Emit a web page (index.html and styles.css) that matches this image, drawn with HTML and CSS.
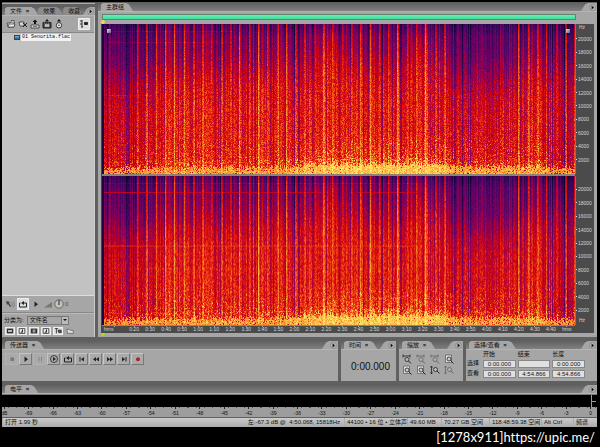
FILE: index.html
```html
<!DOCTYPE html>
<html lang="zh-CN">
<head>
<meta charset="utf-8">
<title>Audition</title>
<link rel="stylesheet" href="styles.css">
</head>
<body>
<svg class="defs" aria-hidden="true">
  <symbol id="menu" viewBox="0 0 8 8"><circle cx="4" cy="4" r="3.4" fill="#b4b4b4" stroke="#777" stroke-width=".6"/><path d="M3 1.8 5.8 4 3 6.2z" fill="#111"/></symbol>
  <symbol id="open" viewBox="0 0 10 10"><path d="M1 4h3l1-1h3v5H2z" fill="#ddd" stroke="#333" stroke-width=".7"/><path d="M5 1.5h3V4M2 8l1-3h6L8 8z" fill="#eee" stroke="#333" stroke-width=".7"/></symbol>
  <symbol id="close" viewBox="0 0 10 10"><path d="M1 3h5v4H2z" fill="#ddd" stroke="#333" stroke-width=".8"/><path d="m5 4 4 4m0-4L5 8" stroke="#222"/></symbol>
  <symbol id="insert" viewBox="0 0 10 10"><path d="M5 .5 7.4 3H6v2H4V3H2.600z" fill="#111"/><path d="M1 6h8v3H1z" fill="#ddd" stroke="#333" stroke-width=".8"/><path d="M3 7.500h4" stroke="#333" stroke-width=".6"/></symbol>
  <symbol id="film" viewBox="0 0 10 10"><path d="M5 0 7 2.500H3z" fill="#111"/><path d="M1 3.500h8v5.500H1z" fill="#444" stroke="#222"/><path d="M3 5.500h4v2H3zM2 4h1m1 0h1m1 0h1" fill="#bbb" stroke="#ddd" stroke-width=".5"/></symbol>
  <symbol id="cd" viewBox="0 0 10 10"><path d="M5 0 7 2.500H3z" fill="#111"/><circle cx="5" cy="6.300" r="2.700" fill="#eee" stroke="#333"/><circle cx="5" cy="6.300" r=".7"/></symbol>
  <symbol id="opts" viewBox="0 0 10 10"><path d="M1 2h2M1 5h2M2 8h2M3 1v7" stroke="#333"/><rect x="5" y="3" width="4" height="3" rx="1" fill="#222"/></symbol>
  <symbol id="auto" viewBox="0 0 10 10"><path d="m1 2 4 1-1 1 2 3-1 1-2-3-1 1z" fill="#444"/><path d="M6.500 3q1.500 2 0 5M8.500 2.500q1.500 3 0 6" fill="none" stroke="#777" stroke-width=".7"/></symbol>
  <symbol id="loop" viewBox="0 0 10 10"><path d="M2.500 4H1.500v4h7V4H5" fill="none" stroke="#222"/><path d="M6 2v4L3 4z" fill="#222"/></symbol>
  <symbol id="play" viewBox="0 0 10 10"><path d="m3.500 2.500 3.500 2.700L3.500 8z" fill="#222"/></symbol>
  <symbol id="stop" viewBox="0 0 10 10"><path d="M3.500 3.500h3.500V7H3.500z" fill="#777"/></symbol>
  <symbol id="pause" viewBox="0 0 10 10"><path d="M4 3v4.500M6.500 3v4.500" stroke="#888"/></symbol>
  <symbol id="playcircle" viewBox="0 0 10 10"><circle cx="5" cy="5" r="3.500" fill="none" stroke="#222" stroke-width=".8"/><path d="m4 3 3 2-3 2z" fill="#222"/></symbol>
  <symbol id="start" viewBox="0 0 10 10"><path d="M3 3v4.500" stroke="#222"/><path d="M7 3v4.500L4 5.200z" fill="#222"/></symbol>
  <symbol id="rew" viewBox="0 0 10 10"><path d="M5 3v4.500L2 5.200zM8 3v4.500L5 5.200z" fill="#222"/></symbol>
  <symbol id="fwd" viewBox="0 0 10 10"><path d="M2 3v4.500l3-2.300zM5 3v4.500l3-2.300z" fill="#222"/></symbol>
  <symbol id="end" viewBox="0 0 10 10"><path d="M7 3v4.500" stroke="#222"/><path d="M3 3v4.500l3-2.300z" fill="#222"/></symbol>
  <symbol id="rec" viewBox="0 0 10 10"><circle cx="5" cy="5.200" r="2" fill="#b3202a"/></symbol>
  <symbol id="volume" viewBox="0 0 10 10"><path d="M1 8.500 9 3v5.500z" fill="#777"/></symbol>
  <symbol id="knob" viewBox="0 0 10 10"><circle cx="5" cy="5" r="4.200" fill="#c5c4b8" stroke="#555" stroke-width=".8"/><path d="M5 1v5" stroke="#222"/></symbol>
  <symbol id="wave" viewBox="0 0 10 10"><path d="M1 2h8v6H1z" fill="#333"/><path d="M2.500 4h5v2h-5z" fill="#ddd"/></symbol>
  <symbol id="note" viewBox="0 0 10 10"><path d="M1.500 2h7v6h-7z" fill="#eee" stroke="#333"/><path d="M5.500 3v3.500M3.500 6.500h2" stroke="#111" stroke-width="1.200"/></symbol>
  <symbol id="tracks" viewBox="0 0 10 10"><path d="M1 2h8v6H1z" fill="#333"/><path d="M3.500 3h1v4h-1zM5.500 3h1v4h-1z" fill="#eee"/></symbol>
  <symbol id="tree" viewBox="0 0 10 10"><path d="M1 2h4M3 2v6M5 4h4v3H6z" fill="#555" stroke="#222"/></symbol>
  <symbol id="folder" viewBox="0 0 10 10"><path d="M1 3h3l1 1h4v4H2z" fill="#ddd" stroke="#666"/></symbol>
  <symbol id="zoomh" viewBox="0 0 10 10"><path d="M1 2h7M1 .5v3M8 .5v3" stroke="#222" stroke-width=".8"/><circle cx="5" cy="5.500" r="2" fill="#bbb" stroke="#222" stroke-width=".8"/><path d="m6.500 7 2.500 2.500" stroke="#222"/></symbol>
  <symbol id="zoompage" viewBox="0 0 10 10"><path d="M1.500 1h6v7.500h-6z" fill="#ddd" stroke="#555" stroke-width=".7"/><circle cx="5" cy="5" r="2" fill="#ccc" stroke="#222" stroke-width=".8"/><path d="m6.500 6.500 3 3" stroke="#222"/></symbol>
  <symbol id="zoomv" viewBox="0 0 10 10"><path d="M1.500 1v8M.5 2.500l1-1.500 1 1.500m-2 5 1 1.500 1-1.500" fill="none" stroke="#222" stroke-width=".8"/><circle cx="5.500" cy="4.500" r="2" fill="#bbb" stroke="#222" stroke-width=".8"/><path d="m7 6 2.500 2.500" stroke="#222"/></symbol>
</svg>

<main class="app">
  <div class="workspace">
    <section class="panel files">
      <header class="head">
        <span class="tab">文件 <b>×</b></span><span class="tab idle">效果</span><span class="tab idle last">收藏夹</span>
        <button class="menu" aria-label="菜单"><svg><use href="#menu"/></svg></button>
      </header>
      <div class="body file-body">
        <div class="tools">
          <button aria-label="打开"><svg><use href="#open"/></svg></button>
          <button aria-label="关闭"><svg><use href="#close"/></svg></button>
          <button aria-label="插入"><svg><use href="#insert"/></svg></button>
          <button aria-label="编辑"><svg><use href="#film"/></svg></button>
          <button aria-label="光盘"><svg><use href="#cd"/></svg></button>
          <button class="lit push" aria-label="选项"><svg><use href="#opts"/></svg></button>
        </div>
        <ul class="list"><li><i class="thumb"></i><span>01 Senorita.flac</span></li></ul>
        <div class="preview">
          <button aria-label="自动播放"><svg><use href="#auto"/></svg></button>
          <button class="lit" aria-label="循环"><svg><use href="#loop"/></svg></button>
          <button aria-label="播放"><svg><use href="#play"/></svg></button>
          <span class="vol"><svg><use href="#volume"/></svg><svg><use href="#knob"/></svg>0</span>
        </div>
        <div class="sort"><label for="sort">分类为:</label><span class="pick"><select id="sort"><option>文件名</option></select></span></div>
        <div class="filters">
          <button class="lit" aria-label="波形"><svg><use href="#wave"/></svg></button>
          <button class="lit" aria-label="音符"><svg><use href="#note"/></svg></button>
          <button class="lit" aria-label="视频"><svg><use href="#tracks"/></svg></button>
          <button class="lit" aria-label="循环文件"><svg><use href="#note"/></svg></button>
          <button class="lit" aria-label="树"><svg><use href="#tree"/></svg></button>
          <button aria-label="文件夹"><svg><use href="#folder"/></svg></button>
        </div>
      </div>
    </section>

    <section class="panel editor">
      <header class="head"><span class="tab">主群组</span><button class="menu" aria-label="菜单"><svg><use href="#menu"/></svg></button></header>
      <div class="body edit-body">
        <div class="range"></div>
        <div class="cue"></div>
        <div class="view">
          <div class="spectra">
            <canvas data-channel="0"></canvas>
            <canvas data-channel="1"></canvas>
            <i class="grip left"></i><i class="grip right"></i>
          </div>
          <div class="freqs">
            <div class="scale top"><span class="hz">Hz</span><div class="marks"></div></div>
            <div class="scale bottom"><div class="marks"></div><span class="hz">Hz</span></div>
          </div>
          <div class="times"></div>
        </div>
        <div class="cue green"></div>
      </div>
    </section>
  </div>

  <div class="dock">
    <section class="panel">
      <header class="head"><span class="tab">传送器 <b>×</b></span><button class="menu" aria-label="菜单"><svg><use href="#menu"/></svg></button></header>
      <div class="body transport">
        <button class="flat" aria-label="停止"><svg><use href="#stop"/></svg></button>
        <button aria-label="播放"><svg><use href="#play"/></svg></button>
        <button class="flat" aria-label="暂停"><svg><use href="#pause"/></svg></button>
        <button aria-label="播放到结尾"><svg><use href="#playcircle"/></svg></button>
        <button aria-label="循环播放"><svg><use href="#loop"/></svg></button>
        <button aria-label="开头"><svg><use href="#start"/></svg></button>
        <button aria-label="倒退"><svg><use href="#rew"/></svg></button>
        <button aria-label="快进"><svg><use href="#fwd"/></svg></button>
        <button aria-label="结尾"><svg><use href="#end"/></svg></button>
        <button aria-label="录音"><svg><use href="#rec"/></svg></button>
      </div>
    </section>
    <section class="panel">
      <header class="head"><span class="tab">时间 <b>×</b></span><button class="menu" aria-label="菜单"><svg><use href="#menu"/></svg></button></header>
      <div class="body clock">0:00.000</div>
    </section>
    <section class="panel">
      <header class="head"><span class="tab">缩放 <b>×</b></span><button class="menu" aria-label="菜单"><svg><use href="#menu"/></svg></button></header>
      <div class="body zooms">
        <button aria-label="水平放大"><svg><use href="#zoomh"/></svg></button>
        <button class="dim" aria-label="水平缩小"><svg><use href="#zoomh"/></svg></button>
        <button class="dim" aria-label="全部缩小"><svg><use href="#zoomh"/></svg></button>
        <button aria-label="缩放到选区"><svg><use href="#zoompage"/></svg></button>
        <button aria-label="左边缘"><svg><use href="#zoompage"/></svg></button>
        <button aria-label="右边缘"><svg><use href="#zoompage"/></svg></button>
        <button aria-label="垂直放大"><svg><use href="#zoomv"/></svg></button>
        <button class="dim" aria-label="垂直缩小"><svg><use href="#zoomv"/></svg></button>
      </div>
    </section>
    <section class="panel">
      <header class="head"><span class="tab">选择/查看 <b>×</b></span><button class="menu" aria-label="菜单"><svg><use href="#menu"/></svg></button></header>
      <div class="body select">
        <span></span><span>开始</span><span>结束</span><span>长度</span>
        <span>选择</span><input aria-label="选择开始" value="0:00.000"><input aria-label="选择结束" value=""><input aria-label="选择长度" value="0:00.000">
        <span>查看</span><input aria-label="查看开始" value="0:00.000"><input aria-label="查看结束" value="4:54.866"><input aria-label="查看长度" value="4:54.866">
      </div>
    </section>
  </div>

  <section class="panel levels">
    <header class="head"><span class="tab">电平 <b>×</b></span><button class="menu" aria-label="菜单"><svg><use href="#menu"/></svg></button></header>
    <div class="body">
      <div class="meter"><i></i></div>
      <div class="ruler"></div>
    </div>
  </section>

  <footer class="status">
    <span>打开 1.99 秒</span><span class="pos">左:-67.3 dB @ &nbsp;4:50.068, 15818Hz</span><span>44100 • 16 位 • 立体声</span><span>49.60 MB</span><span>70.27 GB 空间</span><span>118:48:59.38 空间</span><span>Alt Ctrl</span><span>频谱</span>
  </footer>
</main>
<p class="credit">[1278x911]https://upic.me/</p>
<script src="app.js"></script>
</body>
</html>
```
FILE: styles.css
```css
* { box-sizing: border-box; }
body {
  margin: 0;
  height: 100vh;
  display: flex;
  flex-direction: column;
  background: #000;
  color: #111;
  font: 6px/7px "Liberation Sans", "Noto Sans CJK SC", sans-serif;
}
.defs { position: absolute; width: 0; height: 0; }
button { display: flex; align-items: center; justify-content: center; padding: 0; border: 0; background: none; }
svg { display: block; width: 10px; height: 10px; flex: none; }
.app {
  flex: 1;
  min-height: 0;
  margin: 2px 3px 0 2px;
  display: flex;
  flex-direction: column;
  gap: 4px;
  background: #606060;
}
.workspace { flex: 1; min-height: 0; display: grid; grid-template-columns: 93fr 499fr; gap: 3px; padding-top: 1px; }
.panel { min-width: 0; min-height: 0; display: flex; flex-direction: column; }
.head { height: 8px; display: flex; flex: none; padding-left: 3px; background: linear-gradient(#606060, #808080); }
.tab {
  padding: 0 9px 0 5px;
  line-height: 8px;
  white-space: nowrap;
  background: #a6a6a6;
  clip-path: polygon(0 20%, 2px 0, calc(100% - 7px) 0, calc(100% - 4px) 20%, 100% 100%, 0 100%);
}
.tab b { padding-left: 2px; font-size: 6px; }
.tab.idle { background: #8c8c8c; padding: 0 8px 0 5px; }
.tab.last { padding-right: 0; flex: 0 1 22px; overflow: hidden; }
.menu {
  width: 16px;
  height: 8px;
  margin-left: auto;
  flex: none;
  padding: 1px 1px 0 7px;
  background: #a6a6a6;
  clip-path: polygon(0 100%, 4px 20%, 7px 0, 100% 0, 100% 100%);
}
.files .menu { width: 12px; padding-left: 4px; }
.menu svg { width: 7px; height: 7px; }
.body { flex: 1; min-height: 0; background: #a6a6a6; border-top: 1px solid #b4b4b4; }

.files { padding-top: 3px; border-top: 1px solid #aaa; }
.file-body { display: flex; flex-direction: column; border-right: 1px solid #ccc; }
.tools { display: flex; align-items: center; gap: 2px; height: 16px; padding: 0 4px; }
.push { margin-left: auto; }
.lit { background: #ddd; border: 1px solid #eee; }
.list { flex: 1; margin: 0; padding: 1px 0 0 12px; list-style: none; background: #c2c2c2; border-top: 1px solid #888; border-bottom: 1px solid #ddd; }
.list li { display: flex; align-items: center; gap: 1px; }
.list span { background: #f2f2f2; padding: 0 1px; font: 5px/7px "Liberation Mono", monospace; }
.thumb { width: 6px; height: 5px; background: linear-gradient(#7fb3d8, #17618f); border: 1px solid #345; }
.preview { display: flex; align-items: center; gap: 2px; height: 17px; padding-left: 3px; border-bottom: 1px solid #888; }
.vol { display: flex; align-items: center; gap: 1px; color: #553; }
.sort { display: flex; align-items: center; gap: 3px; height: 14px; padding-left: 2px; border-top: 1px solid #bbb; }
.pick { position: relative; }
.pick::after { content: ""; position: absolute; right: 2px; top: 3px; border: 2px solid transparent; border-top-color: #111; pointer-events: none; }
select { display: block; width: 42px; height: 9px; padding: 0 2px; appearance: none; border: 1px solid #777; border-radius: 0; background: linear-gradient(90deg, #a6a6a6 33px, #777 33px, #777 34px, #bbb 34px); color: #111; font: inherit; line-height: 7px; }
.filters { display: flex; gap: 2px; padding: 0 3px 2px; }
.filters button { height: 8px; width: 10px; }
.filters svg { height: 8px; }

.edit-body { display: flex; flex-direction: column; padding: 2px 3px 0; }
.range { height: 6px; margin: 0 18px 0 1px; background: linear-gradient(#62f0b6, #45dc9c); border: 1px solid #61846f; }
.cue { height: 4px; background: radial-gradient(circle at 2px 2px, #f2d35b 2px, transparent 2px); }
.cue.green { height: 4px; background: radial-gradient(circle at 2px 1px, #b6d321 2px, transparent 2px); }
.view { flex: 1; min-height: 0; display: grid; grid-template: minmax(0, 1fr) 8px / minmax(0, 1fr) 19px; background: #4b4b4b; border-left: 1px solid #444; color: #d4d4d4; font-size: 5px; line-height: 6px; }
.spectra { position: relative; min-height: 0; display: grid; grid-template-rows: minmax(0, 1fr) minmax(0, 1fr); gap: 2px; background: #8d8175; }
canvas { display: block; width: 100%; height: 100%; min-height: 0; }
.grip { position: absolute; top: 5px; width: 4px; height: 4px; background: linear-gradient(135deg, #ddd, #646078); }
.grip.left { left: 5px; }
.grip.right { right: 5px; }
.freqs { display: grid; grid-template-rows: minmax(0, 1fr) minmax(0, 1fr); gap: 2px; }
.scale { display: flex; flex-direction: column; border-left: 1px solid #777; }
.hz { height: 8px; padding-left: 3px; }
.top { padding-bottom: 7px; }
.bottom { padding-top: 7px; }
.marks { flex: 1; display: flex; flex-direction: column; }
.marks span { flex: 1; display: flex; align-items: center; gap: 1px; }
.marks span::before { content: ""; width: 1px; height: 1px; background: #ddd; }
.times { display: flex; border-top: 1px solid #888; }
.times span { flex: 16 0 0; min-width: 0; text-align: center; background: linear-gradient(#aaa, #aaa) center top / 1px 1px no-repeat; }
.times span:first-child { flex-grow: 24; text-align: left; text-indent: 2px; }

.dock { display: grid; grid-template-columns: 336fr 55fr 64fr 131fr; gap: 3px; height: 40px; flex: none; }
.transport { display: flex; align-items: flex-start; gap: 1px; padding: 3px 3px; }
.transport button { width: 13px; height: 12px; background: #aaa; border: 1px solid; border-color: #c6c6c6 #777 #777 #c6c6c6; }
.transport .flat { border-color: #b2b2b2; }
.clock { display: flex; align-items: center; justify-content: flex-end; padding: 2px 6px 0 0; font-size: 10px; }
.zooms { display: grid; grid-template-columns: repeat(4, 10px); justify-content: space-between; align-content: space-evenly; padding: 2px 9px 4px 3px; }
.dim { opacity: .5; }
.select { display: grid; grid-template-columns: 14px 1fr 1fr 1fr; gap: 2px; padding: 1px 12px 3px 1px; align-content: space-between; }
.select input { width: 100%; min-width: 0; height: 8px; padding: 0; border: 1px solid #888; background: #e0e0e0; color: #111; text-align: center; font: inherit; line-height: 6px; }

.levels { flex: none; }
.levels .body { overflow: hidden; }
.meter { height: 13px; background: #000; border-top: 1px solid #777; display: flex; justify-content: flex-end; }
.meter i { width: 5px; margin-right: 1px; border-left: 1px solid #999; background: linear-gradient(#999, #999) center / 100% 1px no-repeat; }
.ruler { height: 10px; margin: 0 -6px 0 -10px; display: flex; font-size: 5px; line-height: 6px; background: #9d9d9d; }
.ruler span { flex: 1 0 0; min-width: 0; padding-top: 3px; text-align: center; background: linear-gradient(#222, #222) center top / 1px 2px no-repeat, repeating-linear-gradient(90deg, #555 0 1px, transparent 1px 8px) 0 0 / 100% 1px no-repeat; }
.status { flex: none; height: 9px; margin-top: -3px; display: grid; grid-template-columns: 165px 1fr 63px 34px 48px 52px 32px 24px; line-height: 8px; background: linear-gradient(#ccc, #aaa); white-space: nowrap; }
.status span { padding-left: 2px; border-left: 1px solid #aaa; }
.status .pos { text-align: right; padding-right: 4px; border: 0; }
.credit { flex: none; margin: 0; height: 20px; padding-right: 5px; color: #fff; text-align: right; font: 13px/20px Lato, sans-serif; font-variant-ligatures: none; }
```
FILE: app.js
```js
const fill = (node, labels) => {
  for (const text of labels) {
    const span = document.createElement('span');
    span.textContent = text;
    node.append(span);
  }
};

document.querySelectorAll('.marks').forEach(node =>
  fill(node, Array.from({ length: 10 }, (_, i) => 20000 - i * 2000)));

const seconds = Array.from({ length: 27 }, (_, i) => 20 + i * 10);
fill(document.querySelector('.times'), ['hms',
  ...seconds.map(s => Math.floor(s / 60) + ':' + String(s % 60).padStart(2, '0')), 'hms']);
fill(document.querySelector('.ruler'), ['dB', ...Array.from({ length: 24 }, (_, i) => String(i * 3 - 69))]);

// Palette from silence to full level.
const stops = [
  [0, 16, 2, 48], [0.2, 66, 6, 98], [0.34, 120, 0, 100], [0.46, 180, 0, 50],
  [0.58, 218, 12, 12], [0.7, 243, 68, 20], [0.84, 250, 145, 45], [1, 253, 228, 100]
];
function colour(v) {
  v = Math.max(0.001, Math.min(1, v));
  let i = 1;
  while (stops[i][0] < v) i++;
  const a = stops[i - 1], b = stops[i], t = (v - a[0]) / (b[0] - a[0]);
  return [1, 2, 3].map(k => a[k] + (b[k] - a[k]) * t);
}
function generator(seed) {
  return () => {
    seed = (seed * 1664525 + 1013904223) >>> 0;
    return seed / 4294967296;
  };
}
// Loudness, purple-band depth and bass strength over the length of the song.
const loudness = [[0, -0.08], [0.09, -0.06], [0.13, 0], [0.3, 0], [0.45, 0.01], [0.48, 0.06], [0.5, 0.02], [0.66, 0.01], [0.68, 0.05], [0.72, 0], [0.74, -0.03], [0.9, -0.01], [0.95, -0.02], [0.96, -0.1], [1, -0.08]];
const ceiling = [[0, 0.35], [0.09, 0.35], [0.12, 0.29], [0.45, 0.24], [0.48, 0.12], [0.51, 0.24], [0.65, 0.24], [0.68, 0.14], [0.72, 0.22], [0.74, 0.33], [0.87, 0.34], [0.89, 0.26], [1, 0.26]];
const bass = [[0, 0], [0.1, 0.15], [0.38, 0.25], [0.42, 0.6], [0.48, 1], [0.72, 1], [0.74, 0.45], [0.94, 0.4], [0.95, 0], [1, 0.1]];
function lerp(points, t) {
  for (let i = 1; i < points.length; i++) {
    if (t <= points[i][0]) {
      const [x0, y0] = points[i - 1], [x1, y1] = points[i];
      return y0 + (y1 - y0) * (t - x0) / (x1 - x0);
    }
  }
  return points[points.length - 1][1];
}
function drawSpectrum(canvas, channel) {
  const w = canvas.width = Math.max(1, canvas.clientWidth);
  const h = canvas.height = Math.max(1, canvas.clientHeight);
  const ctx = canvas.getContext('2d');
  const image = ctx.createImageData(w, h);
  const columns = generator(77), noise = generator(500 + channel);
  for (let x = 0; x < w; x++) {
    const t = x / w, px = t * 473;
    const quiet = t > 0.735 && t < 0.875;
    const phase = (px - 34.5 + 930) % 9.3;
    let beat = phase < 1 ? 0.36 : phase < 2 ? 0.28 : phase > 4.3 && phase < 5.3 ? 0.1 : phase > 7.6 ? -0.06 : 0;
    if (quiet) beat *= 0.25;
    if (px < 32) beat *= 0.4;
    let column = (columns() - 0.5) * 0.15;
    if (columns() < 0.16) column -= 0.13;
    beat *= 0.8 + columns() * 0.3;
    const reach = (columns() - 0.5) * 0.1;
    const low = columns();
    const loud = lerp(loudness, t), edge = lerp(ceiling, t) + reach, deep = lerp(bass, t);
    const bandTop = 0.975 - deep * 0.03 - low * 0.03;
    for (let y = 0; y < h; y++) {
      const d = y / h;
      const body = 1 / (1 + Math.exp(-(d - edge) * 11));
      let v = 0.28 + 0.31 * body;
      v += loud + column + beat * (1 - 0.55 * body);
      v -= Math.max(0, 0.08 - d) * 1.2;
      v += Math.max(0, d - 0.7) * 0.2 * deep;
      v += (noise() - 0.5) * (0.1 + 0.13 * body);
      // Scattered bright harmonics thicken towards the lowest band.
      const scatter = Math.max(0, d - 0.72) / 0.28;
      if (noise() < scatter * (0.12 + deep * 0.25)) v += 0.17;
      if (d > 0.91 - deep * 0.02 && noise() < 0.2 + deep * 0.25) v += 0.14;
      if (d > bandTop && noise() < 0.75 + deep * 0.2) v = Math.max(v, 0.78) + noise() * 0.14 + deep * 0.06;
      if (channel) {
        if (y === 16 && (px < 220 || (px > 255 && px < 315))) v = Math.max(v, 0.5);
        if (y === 70 && px < 315) v = Math.max(v + 0.04, 0.64);
        if (y === 7 && px < 315) v += 0.08;
        if (y === 93 && px < 315) v += 0.04;
      } else {
        if ((y === 18 || y === 7) && px < 130) v += 0.08;
        if (y === 71 && px < 50) v += 0.08;
      }
      if (px < 2) v = 0.06;
      const i = (y * w + x) * 4, c = colour(v);
      image.data[i] = c[0];
      image.data[i + 1] = c[1];
      image.data[i + 2] = c[2];
      image.data[i + 3] = 255;
    }
  }
  ctx.putImageData(image, 0, 0);
}
const draw = () => document.querySelectorAll('canvas').forEach(c => drawSpectrum(c, Number(c.dataset.channel)));
draw();
window.addEventListener('resize', draw);
```
